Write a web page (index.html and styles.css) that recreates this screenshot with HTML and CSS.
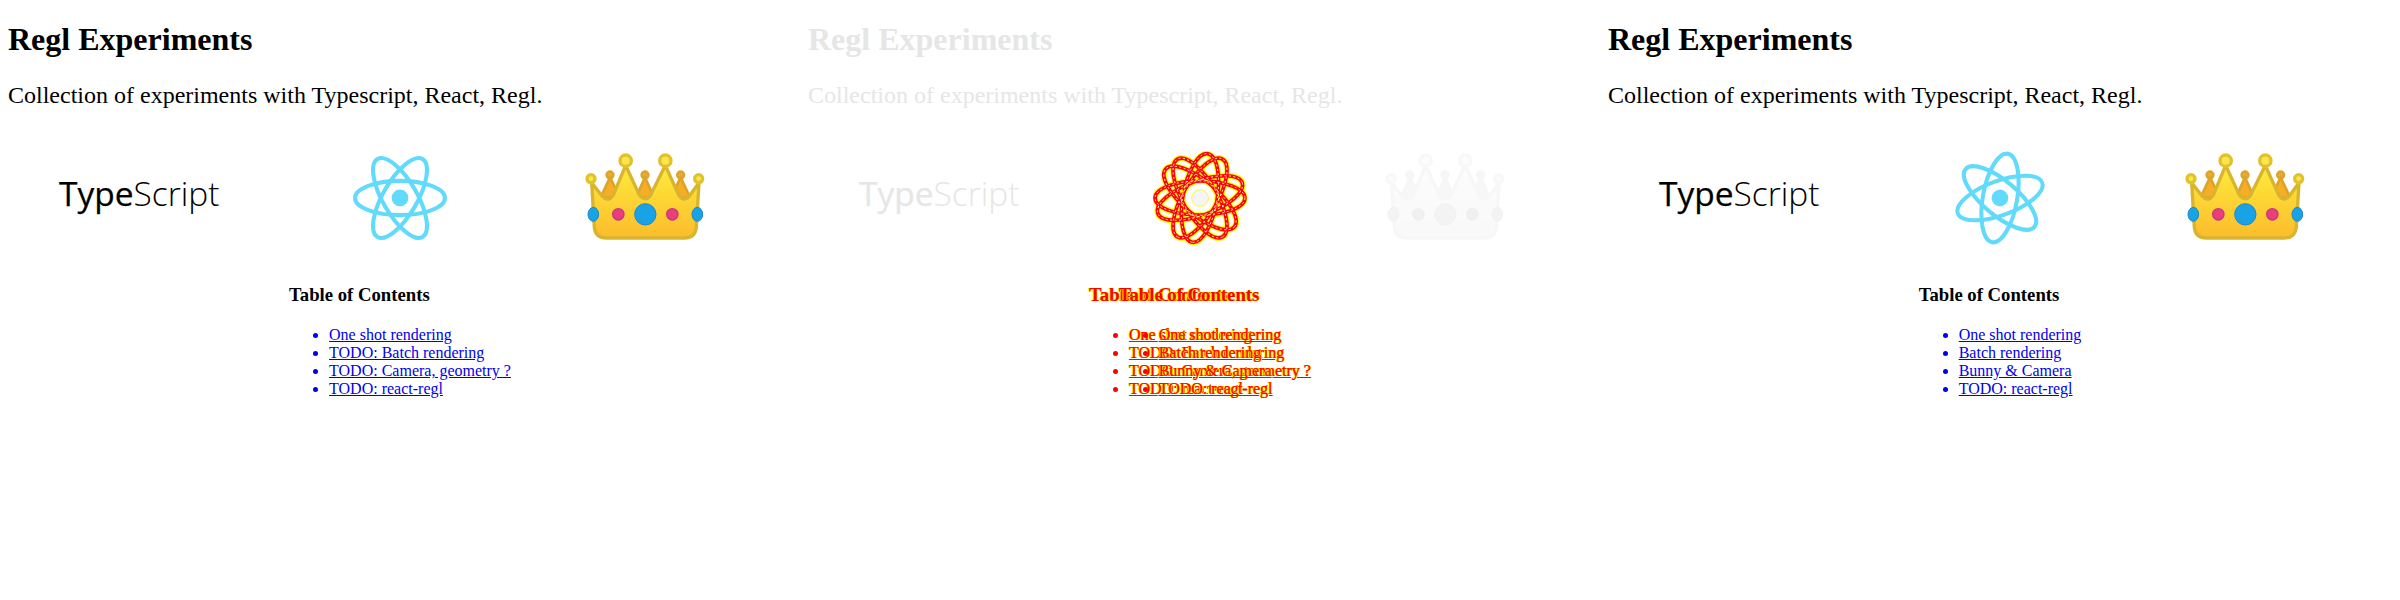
FILE: index.html
```html
<!DOCTYPE html>
<html lang="en">
<head>
<meta charset="UTF-8">
<meta name="viewport" content="width=device-width, initial-scale=1.0">
<title>Regl Experiments</title>
<link rel="stylesheet" href="styles.css">
</head>
<body>

<svg class="defs" width="0" height="0">
  <defs>
    <linearGradient id="crown-fill" x1="0" y1="0" x2="0" y2="1">
      <stop offset="0" stop-color="#ffeb3b"/>
      <stop offset="1" stop-color="#fbbc2c"/>
    </linearGradient>
    <symbol id="react-logo" viewBox="-11.5 -11.5 23 23">
      <circle r="2.05" fill="#61dafb"/>
      <g fill="none" stroke="#61dafb" stroke-width="1">
        <ellipse rx="11" ry="4.2"/>
        <ellipse rx="11" ry="4.2" transform="rotate(60)"/>
        <ellipse rx="11" ry="4.2" transform="rotate(120)"/>
      </g>
    </symbol>
    <symbol id="crown" viewBox="0 0 450 330">
      <g fill="#f9ad25" stroke="#dba52c" stroke-width="8">
        <circle cx="120" cy="105" r="10"/>
        <circle cx="225" cy="105" r="10"/>
        <circle cx="332" cy="105" r="10"/>
        <path d="M120 112 L92 172 H150 Z"/>
        <path d="M225 112 L198 172 H252 Z"/>
        <path d="M332 112 L303 172 H360 Z"/>
      </g>
      <path fill="url(#crown-fill)" stroke="#d9b52f" stroke-width="10" stroke-linejoin="round" d="M65 128 L98 170 Q116 188 130 165 L167 76 L208 165 Q226 188 242 165 L286 76 L326 165 Q342 188 358 168 L387 128 L379 262 Q376 294 342 294 H110 Q76 294 73 262 Z"/>
      <g fill="#fde64a" stroke="#e0c22e" stroke-width="10">
        <circle cx="63" cy="116" r="12"/>
        <circle cx="167" cy="62" r="17"/>
        <circle cx="286" cy="62" r="17"/>
        <circle cx="386" cy="116" r="12"/>
      </g>
      <g fill="#19a3e6" stroke="#1e88c8" stroke-width="3">
        <ellipse cx="70" cy="223" rx="16" ry="21"/>
        <ellipse cx="382" cy="223" rx="16" ry="21"/>
        <circle cx="226" cy="223" r="32"/>
      </g>
      <g fill="#e83e7c" stroke="#c23a78" stroke-width="4">
        <circle cx="145" cy="223" r="17"/>
        <circle cx="307" cy="223" r="17"/>
      </g>
    </symbol>
    <g id="react-rings">
      <ellipse rx="11" ry="4.2"/>
      <ellipse rx="11" ry="4.2" transform="rotate(60)"/>
      <ellipse rx="11" ry="4.2" transform="rotate(120)"/>
      <ellipse rx="11" ry="4.2" transform="rotate(-20)"/>
      <ellipse rx="11" ry="4.2" transform="rotate(40)"/>
      <ellipse rx="11" ry="4.2" transform="rotate(100)"/>
    </g>
  </defs>
</svg>

<main class="panels">

  <section class="panel">
    <h1 class="title">Regl Experiments</h1>
    <p class="intro">Collection of experiments with Typescript, React, Regl.</p>
    <div class="logos">
      <div class="ts-logo">Type<span class="ts-light">Script</span></div>
      <svg class="react"><use href="#react-logo"/></svg>
      <svg class="crown"><use href="#crown"/></svg>
    </div>
    <div class="toc">
      <h3>Table of Contents</h3>
      <ul>
        <li><a href="#">One shot rendering</a></li>
        <li><a href="#">TODO: Batch rendering</a></li>
        <li><a href="#">TODO: Camera, geometry ?</a></li>
        <li><a href="#">TODO: react-regl</a></li>
      </ul>
    </div>
  </section>

  <section class="panel diff">
    <h1 class="title">Regl Experiments</h1>
    <p class="intro">Collection of experiments with Typescript, React, Regl.</p>
    <div class="logos">
      <div class="ts-logo">Type<span class="ts-light">Script</span></div>
      <svg class="react" viewBox="-11.5 -11.5 23 23">
        <use class="diff-halo" href="#react-rings"/>
        <use class="diff-core" href="#react-rings"/>
        <use class="diff-fleck" href="#react-rings"/>
        <circle class="diff-hub" r="2.05"/>
        <circle class="diff-ring" r="4.6"/>
      </svg>
      <svg class="crown"><use href="#crown"/></svg>
    </div>
    <div class="toc-stack">
      <div class="toc">
        <h3>Table of Contents</h3>
        <ul>
          <li><a href="#">One shot rendering</a></li>
          <li><a href="#">TODO: Batch rendering</a></li>
          <li><a href="#">TODO: Camera, geometry ?</a></li>
          <li><a href="#">TODO: react-regl</a></li>
        </ul>
      </div>
      <div class="toc">
        <h3>Table of Contents</h3>
        <ul>
          <li><a href="#">One shot rendering</a></li>
          <li><a href="#">Batch rendering</a></li>
          <li><a href="#">Bunny &amp; Camera</a></li>
          <li><a href="#">TODO: react-regl</a></li>
        </ul>
      </div>
    </div>
  </section>

  <section class="panel">
    <h1 class="title">Regl Experiments</h1>
    <p class="intro">Collection of experiments with Typescript, React, Regl.</p>
    <div class="logos">
      <div class="ts-logo">Type<span class="ts-light">Script</span></div>
      <svg class="react react-turned"><use href="#react-logo"/></svg>
      <svg class="crown"><use href="#crown"/></svg>
    </div>
    <div class="toc">
      <h3>Table of Contents</h3>
      <ul>
        <li><a href="#">One shot rendering</a></li>
        <li><a href="#">Batch rendering</a></li>
        <li><a href="#">Bunny &amp; Camera</a></li>
        <li><a href="#">TODO: react-regl</a></li>
      </ul>
    </div>
  </section>

</main>

</body>
</html>
```

FILE: styles.css
```css
body {
  margin: 0;
  background: #fff;
  color: #000;
  font-family: "Liberation Serif", serif;
}
.defs {
  display: block;
  height: 0;
}
.panels {
  display: grid;
  grid-template-columns: repeat(3, 800px);
}
.panel {
  padding: 0 8px;
}
.title {
  font-size: 32px;
  margin: 21px 0 0;
}
.intro {
  font-size: 24px;
  margin: 24px 0 0;
}
.logos {
  display: flex;
  align-items: center;
  height: 100px;
  margin-top: 40px;
  padding-left: 51px;
}
.ts-logo {
  width: 160px;
  margin-bottom: 12px;
  font-family: "Open Sans", sans-serif;
  font-size: 33.5px;
  -webkit-text-stroke: 0.25px currentColor;
  white-space: nowrap;
}
.ts-light {
  font-weight: 300;
  -webkit-text-stroke: 0;
}
.react {
  width: 94px;
  height: 94px;
  margin-left: 134px;
  margin-bottom: 2px;
}
.react-turned {
  transform: rotate(-20deg);
}
.crown {
  width: 150px;
  height: 110px;
  margin-left: 123px;
  margin-bottom: 8px;
}

/* table of contents */
.toc {
  width: fit-content;
  margin: 35px auto 0;
}
.toc h3 {
  font-size: 18.72px;
  margin: 0 0 20px;
}
.toc ul {
  margin: 0;
  padding-left: 40px;
  font-size: 16px;
  line-height: 18px;
  color: #00e;
}
.toc a {
  color: #00e;
}

/* middle panel: what changed between left and right */
.diff .title,
.diff .intro,
.diff .ts-logo {
  color: #e6e6e6;
}
.diff .crown {
  filter: grayscale(1) opacity(0.1);
}
.diff-halo,
.diff-core,
.diff-fleck {
  fill: none;
}
.diff-halo {
  stroke: #ff0;
  stroke-width: 1.45;
}
.diff-core {
  stroke: #f00;
  stroke-width: 0.9;
}
.diff-fleck {
  stroke: #fff;
  stroke-width: 0.2;
  stroke-dasharray: 0.5 0.6;
}
.diff-hub {
  fill: #f5f5f5;
  stroke: #ff0;
  stroke-width: 0.2;
}
.diff-ring {
  fill: none;
  stroke: #ff0;
  stroke-width: 0.25;
  stroke-dasharray: 0.7 0.5;
}
.toc-stack {
  display: grid;
}
.toc-stack .toc {
  grid-area: 1 / 1;
}
.toc-stack h3,
.toc-stack ul,
.toc-stack a {
  color: #f00;
  -webkit-text-stroke: 0.2px #f00;
  text-shadow: 1px 0 #ff0, -1px 0 #ff0;
}
```
